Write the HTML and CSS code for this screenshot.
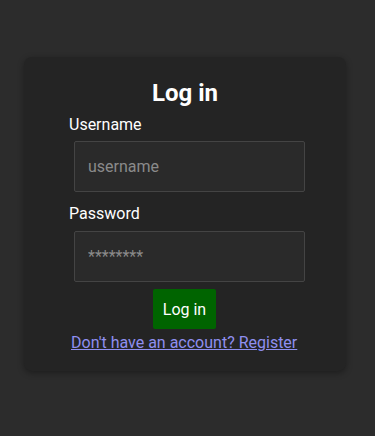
FILE: index.html
```html
<!DOCTYPE html>
<html lang="en">
<head>
    <meta charset="UTF-8">
    <meta name="viewport" content="width=device-width, initial-scale=1.0">
    <title>Log in</title>
    <link rel="stylesheet" href="styles.css">
</head>
<body>

    <!-- Login card -->
    <div class="card">
        <h1>Log in</h1>
        <form class="login-form">
            <label for="username">Username</label>
            <input type="text" id="username" placeholder="username">
            <label for="password">Password</label>
            <input type="password" id="password" placeholder="********">
            <button type="submit">Log in</button>
        </form>
        <a href="#" class="register-link">Don't have an account? Register</a>
    </div>

</body>
</html>
```

FILE: styles.css
```css
/* Page */
body {
    margin: 0;
    padding: 57px 0 0 24px;
    background: #2c2c2c;
    font-family: Roboto, "Liberation Sans", sans-serif;
    color: #fff;
    height: 436px;
    box-sizing: border-box;
}

/* Card */
.card {
    width: 322px;
    box-sizing: border-box;
    background: #242424;
    border-radius: 8px;
    box-shadow: 0 2px 6px rgba(0, 0, 0, 0.35);
    padding: 22px 0 19px 45px;
    display: flex;
    flex-direction: column;
}

h1 {
    margin: 0 45px 8px 0;
    font-size: 24px;
    line-height: 28px;
    text-align: center;
    font-weight: bold;
}

.login-form {
    display: flex;
    flex-direction: column;
    align-items: flex-start;
}

label {
    font-size: 16px;
    line-height: 19px;
    margin-bottom: 7px;
}

input {
    width: 231px;
    height: 51px;
    box-sizing: border-box;
    margin-left: 5px;
    margin-bottom: 12px;
    padding: 0 13px;
    background: #2a2a2a;
    border: 1px solid #444;
    border-radius: 2px;
    color: #fff;
    font-family: inherit;
    font-size: 16px;
    outline: none;
}

input::placeholder {
    color: #8a8a8a;
}

#password {
    margin-bottom: 7px;
}

label[for="password"] {
    margin-bottom: 8px;
}

button {
    margin-left: 84px;
    width: 63px;
    height: 40px;
    padding: 0;
    background: #006400;
    color: #fff;
    border: none;
    border-radius: 2px;
    font-family: inherit;
    font-size: 16px;
    cursor: pointer;
}

.register-link {
    align-self: flex-start;
    margin: 4px 0 0 2px;
    font-size: 16px;
    line-height: 19px;
    color: #8f8ff0;
}
```
